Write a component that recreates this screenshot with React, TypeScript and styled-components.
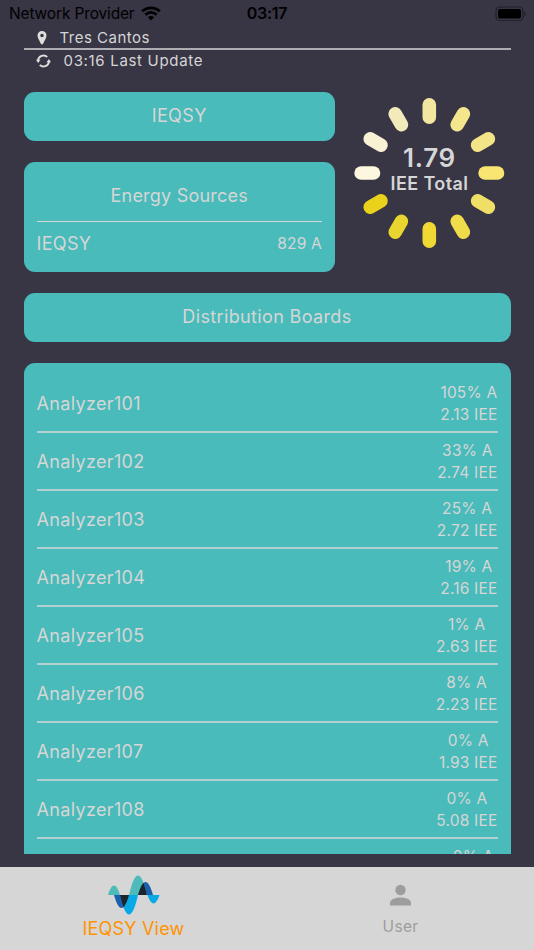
import React from "react";
import styled, { createGlobalStyle } from "styled-components";

const GlobalStyle = createGlobalStyle`
  * { box-sizing: border-box; }
  body { margin: 0; background: #383545; }
`;

const Screen = styled.div`
  width: 534px;
  height: 950px;
  overflow: hidden;
  display: flex;
  flex-direction: column;
  background: #383545;
  color: #d6d6d6;
  font-family: Inter, "Liberation Sans", sans-serif;
  white-space: nowrap;
`;

const StatusBar = styled.div`
  height: 27px;
  flex: none;
  display: grid;
  grid-template-columns: 1fr auto 1fr;
  align-items: center;
  padding: 0 7px 0 9px;
  color: #000;
`;

const Carrier = styled.div`
  display: flex;
  align-items: center;
  gap: 6px;
  font-size: 15.5px;
  line-height: 27px;
  letter-spacing: -0.15px;
`;

const Clock = styled.div`
  font-size: 16px;
  line-height: 27px;
  font-weight: 600;
  letter-spacing: -0.25px;
  margin-left: -2px;
`;

const BatterySlot = styled.div`
  display: flex;
  justify-content: flex-end;
`;

const InfoHeader = styled.div`
  height: 65px;
  flex: none;
  margin: 0 23.5px;
`;

const InfoRow = styled.div<{ $gap: number; $line?: boolean }>`
  display: flex;
  align-items: center;
  gap: ${(p) => p.$gap}px;
  height: ${(p) => (p.$line ? 23 : 21)}px;
  padding-left: 12px;
  border-bottom: ${(p) => (p.$line ? "2px solid #aeadb2" : "none")};
  font-size: 15px;
  letter-spacing: ${(p) => (p.$line ? 0.5 : 0.68)}px;
`;

const Content = styled.div`
  height: 762px;
  flex: none;
  overflow: hidden;
  margin: 0 23.5px;
  display: flex;
  flex-direction: column;
  gap: 21px;
`;

const Summary = styled.div`
  display: flex;
  height: 180px;
  flex: none;
`;

const SummaryCards = styled.div`
  width: 311.5px;
  display: flex;
  flex-direction: column;
  gap: 21px;
`;

const TitleCard = styled.div`
  height: 49px;
  flex: none;
  display: flex;
  align-items: center;
  justify-content: center;
  padding-bottom: 2px;
  border-radius: 11px;
  background: #49bbba;
  font-size: 18px;
  letter-spacing: 0.36px;
`;

const SourcesCard = styled.div`
  height: 110.5px;
  border-radius: 11px;
  background: #49bbba;
  padding: 8px 13px 0;
`;

const SourcesTitle = styled.div`
  height: 52px;
  line-height: 52px;
  text-align: center;
  font-size: 18px;
  letter-spacing: 0.22px;
  border-bottom: 1px solid #d6d6d6;
`;

const SourceRow = styled.div`
  height: 43px;
  display: flex;
  align-items: center;
  justify-content: space-between;
`;

const Name = styled.span`
  font-size: 18px;
  letter-spacing: 0.34px;
`;

const Reading = styled.span`
  font-size: 15.5px;
  line-height: 22px;
  letter-spacing: 0.2px;
`;

const Gauge = styled.div`
  display: grid;
  place-items: center;
  width: 152px;
  height: 152px;
  margin: 5px 0 0 18px;
  > * { grid-area: 1 / 1; }
`;

const GaugeText = styled.div`
  text-align: center;
  font-weight: 600;
  margin: -7px 0 0 1px;
`;

const GaugeValue = styled.div`
  font-size: 26px;
  line-height: 28px;
  letter-spacing: 0.7px;
`;

const GaugeLabel = styled.div`
  font-size: 18px;
  line-height: 24px;
  letter-spacing: 0.4px;
`;

const BoardList = styled.div`
  flex: none;
  border-radius: 11px;
  background: #49bbba;
  padding: 12px 13px 0;
`;

const BoardRow = styled.div`
  height: 58px;
  display: flex;
  align-items: center;
  justify-content: space-between;
  border-bottom: 2px solid #b2d0cf;
`;

const Readings = styled.div`
  display: flex;
  flex-direction: column;
  align-items: center;
  padding-top: 2px;
`;

const TabBar = styled.div`
  height: 83px;
  flex: none;
  margin-top: 13px;
  display: flex;
  background: #d6d6d6;
`;

const Tab = styled.div<{ $active?: boolean }>`
  flex: 1;
  display: flex;
  flex-direction: column;
  align-items: center;
  padding-top: ${(p) => (p.$active ? 8 : 17)}px;
  color: ${(p) => (p.$active ? "#ff9300" : "#9d9d9d")};
  font-size: ${(p) => (p.$active ? 18 : 15.5)}px;
  line-height: ${(p) => (p.$active ? 27 : 20)}px;
  letter-spacing: ${(p) => (p.$active ? 0.2 : 0.3)}px;
  gap: ${(p) => (p.$active ? 0 : 10.5)}px;
`;

const WifiIcon = () => (
  <svg width="20" height="15" viewBox="0 0 20 15" fill="none">
    <path d="M1.2 5.4a12.5 12.5 0 0 1 17.6 0M4.4 8.7a8 8 0 0 1 11.2 0" stroke="#000" strokeWidth="2.7" />
    <path d="M10 14.4 6.9 11.3a4.4 4.4 0 0 1 6.2 0z" fill="#000" />
  </svg>
);

const BatteryIcon = () => (
  <svg width="32" height="16" viewBox="0 0 32 16">
    <rect x="1" y="1" width="27" height="13.5" rx="4" fill="none" stroke="#22202a" strokeWidth="1.2" />
    <rect x="3" y="3" width="23" height="9.5" rx="2" fill="#000" />
    <path d="M29.4 5.2c1.7.5 1.7 4.6 0 5.1z" fill="#22202a" />
  </svg>
);

const PinIcon = () => (
  <svg width="13" height="14" viewBox="0 0 13 14">
    <path fillRule="evenodd" d="M6 0A4.5 4.5 0 0 0 1.5 4.5C1.5 7.5 3.8 9.500 4.700 12.500Q6 14.500 7.300 12.500C8.200 9.500 10.500 7.500 10.500 4.500A4.500 4.500 0 0 0 6 0zm0 2.700a1.800 1.800 0 1 1 0 3.600 1.800 1.800 0 0 1 0-3.600z" fill="#dededa" />
  </svg>
);

const RefreshIcon = () => (
  <svg width="15" height="14" viewBox="0 0 15 14" fill="none">
    <path d="M2 6.400A5.500 5.500 0 0 1 11.200 3M13 7.600A5.500 5.500 0 0 1 3.800 11" stroke="#dededa" strokeWidth="1.900" />
    <path d="M0 5.700h4.500L2.100 9.100zM15 8.300h-4.500l2.400-3.400z" fill="#dededa" />
  </svg>
);

const PETALS = [
  "#f2e6a0", "#f4e68d", "#f2e487", "#f9e672", "#f0df66", "#f0db4b",
  "#f1d934", "#ead42f", "#ead21c", "#fdf7e0", "#f8f1d4", "#f3eabb",
];

const Petals = () => (
  <svg width="152" height="152" viewBox="-76.3 -76 152 152">
    {PETALS.map((color, i) => (
      <rect key={i} x="-6.8" y="-75" width="13.600" height="26" rx="6.800" fill={color} transform={`rotate(${i * 30})`} />
    ))}
  </svg>
);

const hump = (x: number, w: number, amp: number) =>
  `M${x} 20C${x + w * 0.33} ${20 - (amp * 4) / 3} ${x + w * 0.67} ${20 - (amp * 4) / 3} ${x + w} 20z`;

const WaveLogo = () => (
  <svg width="52" height="40" viewBox="0 0 52 40">
    <clipPath id="wave-trough"><path d={hump(12, 18, -19.500)} /></clipPath>
    <clipPath id="wave-crest"><path d={hump(21, 18, 19.500)} /></clipPath>
    <path d={hump(0, 12, 9.500)} fill="#4dbbb9" />
    <path d={hump(39.500, 12, -8.500)} fill="#08a9e6" />
    <path d={hump(6, 15, -13)} fill="#1b5fae" />
    <path d={hump(12, 18, -19.500)} fill="#08a9e6" />
    <path d={hump(30, 15, 13)} fill="#1b5fae" />
    <path d={hump(21, 18, 19.500)} fill="#4dbbb9" />
    <path d={hump(6, 15, -13)} fill="#1b252e" clipPath="url(#wave-trough)" />
    <path d={hump(30, 15, 13)} fill="#1b252e" clipPath="url(#wave-crest)" />
  </svg>
);

const UserIcon = () => (
  <svg width="22" height="22" viewBox="0 0 22 22" fill="#9d9d9d">
    <circle cx="10.500" cy="6" r="5.200" />
    <path d="M0 21.500v-2.800c0-3.300 6-5.200 10.500-5.200s10.500 1.900 10.500 5.200v2.800z" />
  </svg>
);

const BOARDS = [
  ["Analyzer101", "105% A", "2.13 IEE"],
  ["Analyzer102", "33% A", "2.74 IEE"],
  ["Analyzer103", "25% A", "2.72 IEE"],
  ["Analyzer104", "19% A", "2.16 IEE"],
  ["Analyzer105", "1% A", "2.63 IEE"],
  ["Analyzer106", "8% A", "2.23 IEE"],
  ["Analyzer107", "0% A", "1.93 IEE"],
  ["Analyzer108", "0% A", "5.08 IEE"],
  ["Analyzer109", "0% A", "1.2 IEE"],
];

export default function App() {
  return (
    <Screen>
      <GlobalStyle />
      <StatusBar>
        <Carrier>Network Provider <WifiIcon /></Carrier>
        <Clock>03:17</Clock>
        <BatterySlot><BatteryIcon /></BatterySlot>
      </StatusBar>
      <InfoHeader>
        <InfoRow $gap={11} $line><PinIcon />Tres Cantos</InfoRow>
        <InfoRow $gap={13}><RefreshIcon />03:16 Last Update</InfoRow>
      </InfoHeader>
      <Content>
        <Summary>
          <SummaryCards>
            <TitleCard>IEQSY</TitleCard>
            <SourcesCard>
              <SourcesTitle>Energy Sources</SourcesTitle>
              <SourceRow><Name>IEQSY</Name><Reading>829 A</Reading></SourceRow>
            </SourcesCard>
          </SummaryCards>
          <Gauge>
            <Petals />
            <GaugeText>
              <GaugeValue>1.79</GaugeValue>
              <GaugeLabel>IEE Total</GaugeLabel>
            </GaugeText>
          </Gauge>
        </Summary>
        <TitleCard>Distribution Boards</TitleCard>
        <BoardList>
          {BOARDS.map(([name, load, iee]) => (
            <BoardRow key={name}>
              <Name>{name}</Name>
              <Readings><Reading>{load}</Reading><Reading>{iee}</Reading></Readings>
            </BoardRow>
          ))}
        </BoardList>
      </Content>
      <TabBar>
        <Tab $active><WaveLogo />IEQSY View</Tab>
        <Tab><UserIcon />User</Tab>
      </TabBar>
    </Screen>
  );
}
